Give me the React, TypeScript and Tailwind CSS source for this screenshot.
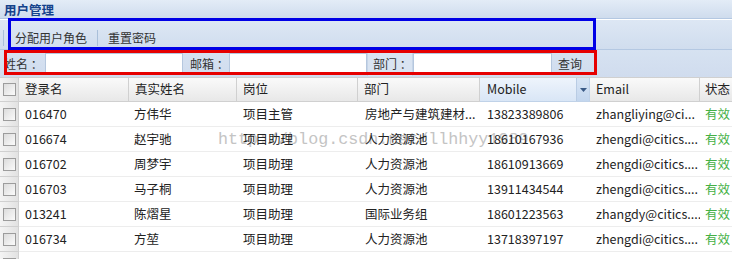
import React from "react";

const font = { fontFamily: '"Noto Sans CJK SC", "Noto Sans", sans-serif' };

const cols = "grid grid-cols-[19px_110px_108px_121px_122px_110px_110px_32px]";

const rows = [
  ["016470", "方伟华", "项目主管", "房地产与建筑建材...", "13823389806", "zhangliying@ci..."],
  ["016674", "赵宇驰", "项目助理", "人力资源池", "18610167936", "zhengdi@citics...."],
  ["016702", "周梦宇", "项目助理", "人力资源池", "18610913669", "zhengdi@citics...."],
  ["016703", "马子桐", "项目助理", "人力资源池", "13911434544", "zhengdi@citics...."],
  ["013241", "陈熠星", "项目助理", "国际业务组", "18601223563", "zhangdy@citics...."],
  ["016734", "方堃", "项目助理", "人力资源池", "13718397197", "zhengdi@citics...."],
  ["", "", "", "", "", ""],
];

function Check() {
  return (
    <div className="w-[13px] h-[13px] border border-[#9c9c9c] bg-gradient-to-br from-[#dcdcdc] to-[#fbfbfb]" />
  );
}

function CheckCell({ h }: { h: string }) {
  return (
    <div className={`${h} flex items-center justify-center border-r border-b border-[#d0d0d0] bg-gradient-to-r from-[#f4f4f4] to-[#e2e2e2]`}>
      <Check />
    </div>
  );
}

export default function App() {
  return (
    <div className="relative w-[732px] h-[259px] overflow-hidden bg-white text-[#222]" style={font}>
      {/* title */}
      <div className="h-[19px] bg-gradient-to-b from-[#e3ecf7] to-[#cfdced] border-b border-[#b4c8e2] flex items-center pl-[4px] pt-[2px]">
        <span className="text-[12.5px] font-bold text-[#15428b] leading-none">用户管理</span>
      </div>
      {/* toolbar */}
      <div className="h-[30px] bg-gradient-to-b from-[#dde7f4] to-[#d0ddee] border-t border-white flex items-center pt-[7px] text-[12px] text-[#333]">
        <div className="w-px h-[16px] bg-[#a9bfd9] ml-[3px]" />
        <span className="ml-[11px]">分配用户角色</span>
        <div className="w-px h-[16px] bg-[#a9bfd9] ml-[10px]" />
        <span className="ml-[10px]">重置密码</span>
      </div>
      {/* search */}
      <div className="h-[28px] bg-gradient-to-b from-[#d6e2f1] to-[#d0dcee] border-t border-[#b4c8e2] flex items-center text-[12px] text-[#333] whitespace-nowrap">
        <span className="ml-[4px] w-[41px]">姓名 ：</span>
        <div className="w-[138px] h-[21px] bg-white border border-[#b5c7de]" />
        <span className="ml-[7px] w-[39px]">邮箱 ：</span>
        <div className="w-[138px] h-[21px] bg-white border border-[#b5c7de]" />
        <span className="w-[46px] h-[24px] flex items-center pl-[5px] bg-[#d9e4f2] border-x border-[#c6d5e8]">部门 ：</span>
        <div className="w-[139px] h-[21px] bg-white border border-[#b5c7de]" />
        <span className="ml-[6px]">查询</span>
      </div>

      {/* watermark */}
      <div
        className="absolute left-[218px] top-[132px] text-[16.7px] leading-none text-[#c4c4c4] whitespace-nowrap"
        style={{ fontFamily: '"Liberation Mono", monospace' }}
      >
        http://blog.csdn.net/llhhyy1989
      </div>

      {/* grid */}
      <div className="relative z-10 text-[12.5px]">
        <div className={`${cols} border-t border-[#d0d0d0] bg-gradient-to-b from-[#fafafa] to-[#e7e7e7]`}>
          <CheckCell h="h-[24px]" />
          {["登录名", "真实姓名", "岗位", "部门"].map((t, i) => (
            <div key={i} className="h-[24px] flex items-center pl-[6px] border-r border-b border-[#d0d0d0]">{t}</div>
          ))}
          <div className="h-[24px] flex items-center justify-between pl-[7px] border-r border-b border-[#c0d2e8] bg-gradient-to-b from-[#eef4fc] to-[#d9e6f6]">
            <span>Mobile</span>
            <div className="w-[13px] h-full bg-gradient-to-b from-[#d8e5f5] to-[#c3d6ee] border-l border-[#b9cce4] flex items-center justify-center">
              <svg width="7" height="4" viewBox="0 0 7 4"><path d="M0 0h7L3.5 4z" fill="#3a5a86" /></svg>
            </div>
          </div>
          <div className="h-[24px] flex items-center pl-[6px] border-r border-b border-[#d0d0d0]">Email</div>
          <div className="h-[24px] flex items-center pl-[5px] border-b border-[#d0d0d0]">状态</div>
        </div>
        {rows.map((r, i) => (
          <div key={i} className={cols}>
            <CheckCell h="h-[25px]" />
            <div className="h-[25px] flex items-center pl-[6px] border-b border-[#ededed]">{r[0]}</div>
            <div className="h-[25px] flex items-center pl-[5px] border-b border-[#ededed]">{r[1]}</div>
            <div className="h-[25px] flex items-center pl-[6px] border-b border-[#ededed]">{r[2]}</div>
            <div className="h-[25px] flex items-center pl-[7px] border-b border-[#ededed] whitespace-nowrap overflow-hidden">{r[3]}</div>
            <div className="h-[25px] flex items-center pl-[7px] border-b border-[#ededed]">{r[4]}</div>
            <div className="h-[25px] flex items-center pl-[6px] border-b border-[#ededed] whitespace-nowrap overflow-hidden">{r[5]}</div>
            <div className="h-[25px] flex items-center pl-[5px] border-b border-[#ededed] text-[#44b044] whitespace-nowrap">{r[0] ? "有效" : ""}</div>
          </div>
        ))}
      </div>

      {/* annotation rectangles */}
      <div className="absolute left-[8px] top-[18px] w-[588px] h-[32px] border-[3px] border-[#0000e6] pointer-events-none" />
      <div className="absolute left-[4px] top-[50px] w-[593px] h-[25px] border-[3px] border-[#e60000] pointer-events-none" />
    </div>
  );
}
